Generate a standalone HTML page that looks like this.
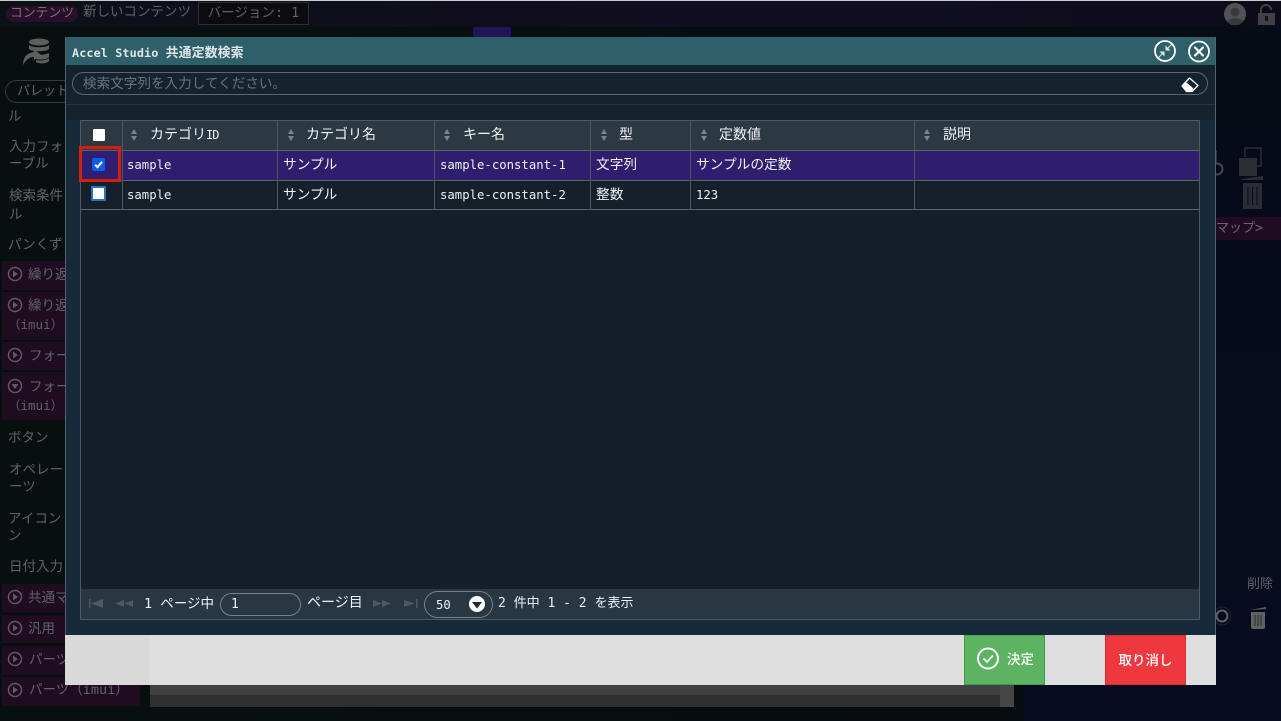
<!DOCTYPE html>
<html lang="ja"><head><meta charset="utf-8"><title>Accel Studio 共通定数検索</title>
<style>
*{box-sizing:border-box}
html,body{margin:0;padding:0;width:1281px;height:721px;overflow:hidden;background:#060b10}
body{position:relative;font-family:"DejaVu Sans Mono","Noto Sans CJK JP",monospace;font-size:13px;color:#fff}
.a{position:absolute;white-space:nowrap}
.s{color:#5e6265;font-size:13.500px;line-height:18px}
.p{position:absolute;left:2px;width:138px;background:#200c20}
.th,.td{position:absolute;white-space:nowrap}
.th{font-size:14px;color:#f1f4f5;top:126px;line-height:18px}
.td{font-size:12.300px;color:#eef2f4;line-height:18px}
.j{font-size:13.700px}
.v{position:absolute;width:1px;top:121px;height:89px;background:#4c5861}
.h{position:absolute;left:81px;width:1118px;height:1px;background:#59656d}
</style></head><body>
<div class="a" style="left:0;top:0;width:1281px;height:1px;background:#ccc"></div>
<div class="a" style="left:0;top:1px;width:1281px;height:26px;background:linear-gradient(90deg,#0c1118,#100e1e 40%,#110e22 70%,#0d0b1a)"></div>
<div class="a" style="left:0;top:27px;width:1281px;height:694px;background:linear-gradient(90deg,#07100f,#060c10 80%,#060c14)"></div>
<div class="a" style="left:1024px;top:130px;width:257px;height:591px;background:linear-gradient(180deg,#060b1a,#050c20)"></div>
<div class="a" style="left:473px;top:27px;width:38px;height:10px;background:#21155a"></div>
<div class="a" style="left:6px;top:6px;width:72px;height:16px;border-radius:8px;background:#2a0f2b;color:#7a6f7b;font-size:12.800px;line-height:16px;text-align:center">コンテンツ</div>
<div class="a s" style="left:83px;top:3px;font-size:13.500px">新しいコンテンツ</div>
<div class="a s" style="left:198px;top:2px;width:111px;height:23px;border:1px solid #2e2f34;background:#0b0b10;line-height:21px;text-align:center">バージョン: 1</div>
<svg class="a" style="left:1224px;top:3px" width="22" height="22" viewBox="0 0 22 22"><circle cx="11" cy="11" r="11" fill="#505356"/><circle cx="11" cy="9" r="4.500" fill="#37393c"/><path d="M3 19c2-5 14-5 16 0l-4 3H7z" fill="#37393c"/></svg>
<svg class="a" style="left:1257px;top:3px" width="19" height="22" viewBox="0 0 19 22"><path d="M4 10V7a5 5 0 0 1 10 0" fill="none" stroke="#3f4144" stroke-width="2"/><rect x="1" y="10" width="17" height="12" fill="#3f4144"/><rect x="8" y="13" width="3" height="5" fill="#151519"/></svg>
<svg class="a" style="left:22px;top:37px" width="30" height="30" viewBox="0 0 30 30"><g fill="#5d5f5f"><ellipse cx="17" cy="5" rx="10" ry="3.500"/><path d="M7 8c3 3 17 3 20 0v4c-3 3-17 3-20 0zM11 17c5 1.500 12 1 16-1v4c-3 3-10 3-13 2zM14 23c4 1 10 .5 13-2v3c-3 3-10 3-13 1z"/><path d="M1 31c0-8 4-12 11-13v-3l7 6-7 5v-3c-5 0-8 3-11 8z" transform="translate(0 -3)"/></g></svg>
<div class="a s" style="left:5px;top:80px;width:70px;height:23px;border:1px solid #33373a;border-radius:12px;padding-left:11px;line-height:21px;font-size:13px">パレット</div>
<div class="a s" style="left:8px;top:108px">ル</div>
<div class="a s" style="left:9px;top:139px;line-height:17px">入力フォ<br>ーブル</div>
<div class="a s" style="left:9px;top:187px;line-height:19px">検索条件<br>ル</div>
<div class="a s" style="left:8px;top:236px">パンくず</div>
<div class="p" style="top:261px;height:29px"></div>
<div class="p" style="top:292px;height:48px"></div>
<div class="p" style="top:342px;height:28px"></div>
<div class="p" style="top:372px;height:48px"></div>
<div class="p" style="top:584px;height:28px"></div>
<div class="p" style="top:615px;height:28px"></div>
<div class="p" style="top:646px;height:29px"></div>
<div class="p" style="top:677px;height:29px"></div>
<svg class="a" style="left:0;top:260px" width="64" height="450" viewBox="0 0 64 450"><g fill="none" stroke="#5f5a62" stroke-width="1.500"><circle cx="15" cy="14" r="6.500"/><circle cx="15" cy="45" r="6.500"/><circle cx="15" cy="95" r="6.500"/><circle cx="15" cy="126" r="6.500"/><circle cx="15" cy="337" r="6.500"/><circle cx="15" cy="368" r="6.500"/><circle cx="15" cy="399" r="6.500"/><circle cx="15" cy="430" r="6.500"/></g><g fill="#5f5a62"><path d="M13 10.500l5 3.500-5 3.500zM13 41.500l5 3.500-5 3.500zM13 91.500l5 3.500-5 3.500zM11.500 124l3.500 5 3.500-5zM13 333.500l5 3.500-5 3.500zM13 364.500l5 3.500-5 3.500zM13 395.500l5 3.500-5 3.500zM13 426.500l5 3.500-5 3.500z"/></g></svg>
<div class="a s" style="left:28px;top:266px">繰り返</div>
<div class="a s" style="left:28px;top:297px">繰り返</div>
<div class="a s" style="left:8px;top:316px;font-size:12.500px">（imui）</div>
<div class="a s" style="left:29px;top:347px">フォー</div>
<div class="a s" style="left:29px;top:378px">フォー</div>
<div class="a s" style="left:8px;top:397px;font-size:12.500px">（imui）</div>
<div class="a s" style="left:8px;top:429px">ボタン</div>
<div class="a s" style="left:9px;top:462px;line-height:17px">オペレー<br>ーツ</div>
<div class="a s" style="left:8px;top:511px;line-height:17px">アイコン<br>ン</div>
<div class="a s" style="left:9px;top:558px">日付入力</div>
<div class="a s" style="left:28px;top:589px">共通マ</div>
<div class="a s" style="left:28px;top:620px">汎用</div>
<div class="a s" style="left:29px;top:651px">パーツ</div>
<div class="a s" style="left:29px;top:681px">パーツ（imui）</div>
<div class="a" style="left:150px;top:685px;width:850px;height:10px;background:#404040"></div>
<div class="a" style="left:150px;top:695px;width:850px;height:12px;background:#2f2f2f"></div>
<div class="a" style="left:1000px;top:685px;width:14px;height:22px;background:#464646"></div>
<svg class="a" style="left:1216px;top:146px" width="60" height="66" viewBox="0 0 60 66"><path d="M0 4v14" stroke="#3b3f42" stroke-width="1.500"/><circle cx="1" cy="23" r="5.500" fill="none" stroke="#44484b" stroke-width="2"/><rect x="23" y="12" width="18" height="18" fill="#2a2d33"/><path d="M29 11V2h16v18h-4" fill="none" stroke="#2a2d33" stroke-width="1.500"/><g fill="#2a2d33"><rect x="27" y="37" width="19" height="26"/><path d="M26 33l21-3v4h-21z"/></g><path d="M32 41v18M36.500 41v18M41 41v18" stroke="#0b1020" stroke-width="1.200"/></svg>
<div class="a" style="left:1216px;top:217px;width:65px;height:23px;background:#1f0c23;color:#6e6374;font-size:13px;line-height:23px">マップ&gt;</div>
<div class="a s" style="left:1247px;top:576px;font-size:13px;color:#5f6265">削除</div>
<svg class="a" style="left:1214px;top:603px" width="56" height="28" viewBox="0 0 56 28"><circle cx="8" cy="13" r="9" fill="none" stroke="#222" stroke-width="1"/><circle cx="8" cy="13" r="5.500" fill="none" stroke="#5e6062" stroke-width="2"/><path d="M36 7l16-3v2zM37 9h14v15q0 2-2 2H39q-2 0-2-2z" fill="#5e6062"/><path d="M41 12v11M44 12v11M47 12v11" stroke="#2b2d2f"/></svg>

<div class="a" style="left:65px;top:65px;width:1151px;height:570px;background:#172a3a"></div>
<div class="a" style="left:65px;top:65px;width:1151px;height:55px;background:#15232f"></div>
<div class="a" style="left:65px;top:37px;width:1px;height:598px;background:#53626b"></div>
<div class="a" style="left:1215px;top:37px;width:1px;height:598px;background:#53626b"></div>
<div class="a" style="left:66px;top:37px;width:1149px;height:28px;background:#2f5f69"></div>
<div class="a" style="left:72px;top:45px;font-size:11.800px;font-weight:bold;color:#dfe6e8;line-height:17px;letter-spacing:.1px">Accel Studio <span style="font-size:12.900px">共通定数検索</span></div>
<svg class="a" style="left:1153px;top:39px" width="24" height="24" viewBox="0 0 24 24"><circle cx="12" cy="12" r="10" fill="none" stroke="#fff" stroke-width="1.800"/><path d="M19 5l-5 5M10 14l-5 5" stroke="#dfe6e8" stroke-width="1"/><path d="M12.500 6.500v5h5zM11.500 17.500v-5h-5z" fill="#dfe6e8"/></svg>
<svg class="a" style="left:1187px;top:40px" width="24" height="24" viewBox="0 0 24 24"><circle cx="12" cy="11.500" r="10" fill="none" stroke="#fff" stroke-width="1.800"/><path d="M8 7.500l8 8M16 7.500l-8 8" stroke="#fff" stroke-width="2.200" stroke-linecap="round"/></svg>
<div class="a" style="left:72px;top:72px;width:1136px;height:23px;border:1px solid #5c666d;border-radius:12px"></div>
<div class="a" style="left:83px;top:76px;color:#69747c;font-size:13.600px;line-height:17px">検索文字列を入力してください。</div>
<svg class="a" style="left:1181px;top:76px" width="18" height="17" viewBox="0 0 18 17"><path d="M1 10L8.500 2 17 9.500 11 15.500H5.500z" fill="#15232f" stroke="#fff" stroke-width="1.300" stroke-linejoin="round"/><path d="M1 10l4-4 7.500 6.500L10.500 15.500h-5z" fill="#fff"/></svg>
<div class="a" style="left:66px;top:104px;width:1149px;height:1px;background:#25343f"></div>

<div class="a" style="left:80px;top:120px;width:1120px;height:500px;border:1px solid #4d5a63;background:#141f2a"></div>
<div class="a" style="left:81px;top:121px;width:1118px;height:29px;background:#2c3943"></div>
<div class="a" style="left:81px;top:151px;width:1118px;height:29px;background:#2f1e6e"></div>
<div class="a" style="left:81px;top:181px;width:1118px;height:28px;background:#15202b"></div>
<div class="h" style="top:150px"></div><div class="h" style="top:180px"></div><div class="h" style="top:209px"></div>
<div class="v" style="left:122px"></div><div class="v" style="left:277px"></div><div class="v" style="left:434px"></div><div class="v" style="left:590px"></div><div class="v" style="left:690px"></div><div class="v" style="left:914px"></div>

<div class="a" style="left:93px;top:129px;width:12px;height:12px;background:#fff;border-radius:1px"></div>
<div class="a" style="left:92px;top:158px;width:13px;height:13px;background:#0a5cf0;border-radius:2px"></div>
<svg class="a" style="left:92px;top:158px" width="13" height="13" viewBox="0 0 13 13"><path d="M3 6.800l2.500 2.400L10 3.800" fill="none" stroke="#fff" stroke-width="2"/></svg>
<div class="a" style="left:91px;top:186px;width:15px;height:15px;background:#fff;border:2px solid #2a73c2;border-radius:1px"></div>
<div class="a" style="left:79px;top:146px;width:42px;height:36px;border:3px solid #d61f0b"></div>

<svg class="a" style="left:0;top:0" width="1000" height="150" viewBox="0 0 1000 150"><g fill="#79848b"><path d="M131 134l3-5 3 5zM131 136h6l-3 5zM288 134l3-5 3 5zM288 136h6l-3 5zM444 134l3-5 3 5zM444 136h6l-3 5zM601 134l3-5 3 5zM601 136h6l-3 5zM701 134l3-5 3 5zM701 136h6l-3 5zM924 134l3-5 3 5zM924 136h6l-3 5z"/></g></svg>
<div class="th" style="left:150px">カテゴリ<span style="font-size:12px;letter-spacing:-1px">ID</span></div>
<div class="th" style="left:306px">カテゴリ名</div>
<div class="th" style="left:463px">キー名</div>
<div class="th" style="left:619px">型</div>
<div class="th" style="left:719px">定数値</div>
<div class="th" style="left:943px">説明</div>

<div class="td" style="left:127px;top:156px">sample</div>
<div class="td j" style="left:283px;top:156px">サンプル</div>
<div class="td" style="left:440px;top:156px">sample-constant-1</div>
<div class="td j" style="left:596px;top:156px">文字列</div>
<div class="td j" style="left:696px;top:156px">サンプルの定数</div>
<div class="td" style="left:127px;top:186px">sample</div>
<div class="td j" style="left:283px;top:186px">サンプル</div>
<div class="td" style="left:440px;top:186px">sample-constant-2</div>
<div class="td j" style="left:596px;top:186px">整数</div>
<div class="td" style="left:696px;top:186px">123</div>

<div class="a" style="left:81px;top:589px;width:1118px;height:30px;background:#293743"></div>
<svg class="a" style="left:85px;top:595px" width="340" height="18" viewBox="0 0 340 18"><g fill="#4b5964"><path d="M4 4h1.500v9H4zM6 8.500L18 4v9zM30 8.500L39 5v7zM39 8.500L48 5v7zM288 5l9 3.500-9 3.500zM297 5l9 3.500-9 3.500zM319 5l11 3.500-11 3.500zM331 4h1.500v9H331z"/></g></svg>
<div class="a" style="left:144px;top:596px;font-size:13.500px;line-height:17px;color:#eef2f4">1 ページ中</div>
<div class="a" style="left:220px;top:593px;width:81px;height:23px;border:1px solid #76828a;border-radius:12px;font-size:13px;line-height:22px;padding-left:10px;color:#eef2f4">1</div>
<div class="a" style="left:307px;top:595px;font-size:14px;line-height:17px;color:#eef2f4">ページ目</div>
<div class="a" style="left:424px;top:591px;width:69px;height:27px;border:1px solid #76828a;border-radius:14px;font-size:12.300px;line-height:26px;padding-left:11px;color:#eef2f4">50</div>
<svg class="a" style="left:469px;top:596px" width="16" height="16" viewBox="0 0 16 16"><circle cx="8" cy="8" r="8" fill="#fff"/><path d="M3 6h10l-5 6.500z" fill="#1f2c37"/></svg>
<div class="a" style="left:498px;top:595px;font-size:13px;line-height:17px;color:#eef2f4">2 件中 1 - 2 を表示</div>

<div class="a" style="left:65px;top:635px;width:1151px;height:50px;background:#dedede"></div>
<div class="a" style="left:65px;top:635px;width:84px;height:50px;background:#d9d9d9"></div>
<div class="a" style="left:964px;top:635px;width:81px;height:50px;background:#5cb462;border:1px solid #3f9b48;border-top-color:#4ca653"></div>
<svg class="a" style="left:976px;top:647px" width="24" height="24" viewBox="0 0 24 24"><circle cx="12" cy="11.500" r="10" fill="none" stroke="#fff" stroke-width="2"/><path d="M7.500 11.500l3.500 3.500 6-6.500" fill="none" stroke="#fff" stroke-width="1.800"/></svg>
<div class="a" style="left:1007px;top:651px;font-size:13.500px;line-height:18px;font-weight:500">決定</div>
<div class="a" style="left:1105px;top:635px;width:81px;height:50px;background:#ef383e;border:1px solid #d62f35;text-align:center;font-size:13.500px;line-height:47px;font-family:'Noto Sans CJK JP',sans-serif;font-weight:500">取り消し</div>
</body></html>
